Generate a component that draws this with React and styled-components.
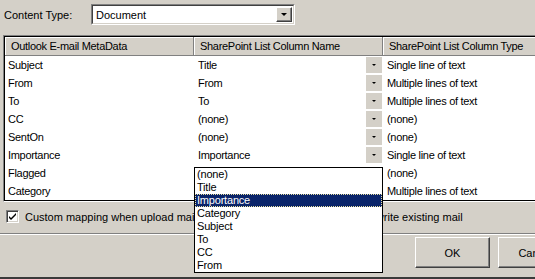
import React from 'react'
import styled, { createGlobalStyle } from 'styled-components'

const GlobalStyle = createGlobalStyle`
  body {
    margin: 0;
    background: #d4d0c8;
    font-family: "Liberation Sans", Arial, sans-serif;
    font-size: 11px;
    color: #000;
  }
`

const Dialog = styled.div`
  position: relative;
  width: 535px;
  height: 279px;
  overflow: hidden;
  background: #d4d0c8;
  display: flex;
  flex-direction: column;
`

const TopRow = styled.div`
  display: flex;
  align-items: center;
  height: 21px;
  margin-top: 4px;
  padding-left: 4px;
`

const Label = styled.span`
  width: 87px;
`

const Combo = styled.div`
  width: 204px;
  height: 21px;
  box-sizing: border-box;
  border: 1px solid;
  border-color: #808080 #fff #fff #808080;
`

const ComboInner = styled.div`
  height: 100%;
  box-sizing: border-box;
  border: 1px solid;
  border-color: #404040 #d4d0c8 #d4d0c8 #404040;
  background: #fff;
  display: flex;
  align-items: center;
  padding-left: 3px;
`

const ComboText = styled.span`
  flex: 1;
`

const ComboButton = styled.div`
  width: 16px;
  height: 15px;
  box-sizing: border-box;
  margin-right: 1px;
  background: #d4d0c8;
  border: 1px solid;
  border-color: #fff #404040 #404040 #fff;
  box-shadow: inset -1px -1px 0 #808080;
  display: flex;
  align-items: center;
  justify-content: center;
`

const Arrow = styled.span`
  width: 0;
  height: 0;
  border-left: ${p => p.$size}px solid transparent;
  border-right: ${p => p.$size}px solid transparent;
  border-top: ${p => p.$size}px solid #000;
`

const List = styled.div`
  margin: 10px 0 0 3px;
  width: 560px;
  box-sizing: border-box;
  border: 1px solid;
  border-color: #808080 #fff #fff #808080;
`

const ListInner = styled.div`
  border: 1px solid #000;
  background: #fff;
`

const Grid = styled.div`
  display: grid;
  grid-template-columns: 189px 189px 1fr;
  letter-spacing: -0.3px;
`

const HeaderCell = styled.div`
  height: 18px;
  display: flex;
  align-items: center;
  padding-left: 6px;
  background: #d4d0c8;
  border-bottom: 1px solid #808080;
  border-right: 1px solid #808080;
  box-shadow: inset 1px 1px 0 #fff;
  white-space: nowrap;
`

const Cell = styled.div`
  height: 18px;
  display: flex;
  align-items: center;
  padding-left: ${p => p.$pad}px;
  white-space: nowrap;
`

const CellText = styled.span`
  flex: 1;
`

const RowButton = styled.div`
  width: 16px;
  height: 16px;
  margin-right: 1px;
  background: #d4d0c8;
  display: flex;
  align-items: center;
  justify-content: center;
`

const CheckRow = styled.div`
  display: grid;
  grid-template-columns: 327px auto;
  margin-top: 8px;
  padding-left: 6px;
`

const CheckItem = styled.label`
  display: flex;
  align-items: center;
  gap: 6px;
  height: 13px;
  white-space: nowrap;
`

const Box = styled.span`
  width: 13px;
  height: 13px;
  box-sizing: border-box;
  background: #fff;
  border: 1px solid;
  border-color: #808080 #fff #fff #808080;
  box-shadow: inset 1px 1px 0 #404040, inset -1px -1px 0 #d4d0c8;
  display: flex;
  align-items: center;
  justify-content: center;
`

const Separator = styled.div`
  margin-top: 10px;
  height: 1px;
  background: #808080;
  border-bottom: 1px solid #fff;
`

const ButtonRow = styled.div`
  display: flex;
  gap: 8px;
  margin-top: 2px;
  padding-left: 415px;
`

const Button = styled.div`
  flex: none;
  width: 75px;
  height: 31px;
  box-sizing: border-box;
  background: #d4d0c8;
  border: 1px solid;
  border-color: #fff #404040 #404040 #fff;
  box-shadow: inset -1px -1px 0 #808080;
  display: flex;
  align-items: center;
  justify-content: center;
`

const BottomEdge = styled.div`
  margin-top: auto;
  height: 2px;
  background: #3a3a3a;
`

const DropList = styled.div`
  position: absolute;
  left: 194px;
  top: 167px;
  width: 189px;
  box-sizing: border-box;
  background: #fff;
  border: 1px solid #000;
  letter-spacing: -0.2px;
`

const DropItem = styled.div`
  height: 13px;
  line-height: 13px;
  padding-left: 2px;
  background: ${p => (p.$active ? '#0a246a' : '#fff')};
  color: ${p => (p.$active ? '#fff' : '#000')};
  outline: ${p => (p.$active ? '1px dotted #e8e0a0' : 'none')};
  outline-offset: -1px;
`

// rows under the open list keep their column-name cell blank
const rows = [
  ['Subject', 'Title', 'Single line of text', true],
  ['From', 'From', 'Multiple lines of text', true],
  ['To', 'To', 'Multiple lines of text', true],
  ['CC', '(none)', '(none)', true],
  ['SentOn', '(none)', '(none)', true],
  ['Importance', 'Importance', 'Single line of text', true],
  ['Flagged', '', '(none)', false],
  ['Category', '', 'Multiple lines of text', false],
]

const options = ['(none)', 'Title', 'Importance', 'Category', 'Subject', 'To', 'CC', 'From']

const Check = () => (
  <Box>
    <svg width="9" height="9" viewBox="0 0 9 9">
      <path d="M1 4 L3 6 L8 1 L8 3 L3 8 L1 6 Z" fill="#000" />
    </svg>
  </Box>
)

export default function App() {
  return (
    <Dialog>
      <GlobalStyle />
      <TopRow>
        <Label>Content Type:</Label>
        <Combo>
          <ComboInner>
            <ComboText>Document</ComboText>
            <ComboButton><Arrow $size={3.5} /></ComboButton>
          </ComboInner>
        </Combo>
      </TopRow>

      <List>
        <ListInner>
          <Grid>
            <HeaderCell>Outlook E-mail MetaData</HeaderCell>
            <HeaderCell>SharePoint List Column Name</HeaderCell>
            <HeaderCell>SharePoint List Column Type</HeaderCell>
            {rows.map(([a, b, c, shown]) => (
              <React.Fragment key={a}>
                <Cell $pad={3}>{a}</Cell>
                <Cell $pad={4}>
                  <CellText>{b}</CellText>
                  {shown && <RowButton><Arrow $size={2.5} /></RowButton>}
                </Cell>
                <Cell $pad={4}>{c}</Cell>
              </React.Fragment>
            ))}
          </Grid>
        </ListInner>
      </List>

      <CheckRow>
        <CheckItem><Check />Custom mapping when upload mail</CheckItem>
        <CheckItem><Check />Overwrite existing mail</CheckItem>
      </CheckRow>

      <Separator />

      <ButtonRow>
        <Button>OK</Button>
        <Button>Cancel</Button>
      </ButtonRow>

      <BottomEdge />

      <DropList>
        {options.map(o => (
          <DropItem key={o} $active={o === 'Importance'}>{o}</DropItem>
        ))}
      </DropList>
    </Dialog>
  )
}
